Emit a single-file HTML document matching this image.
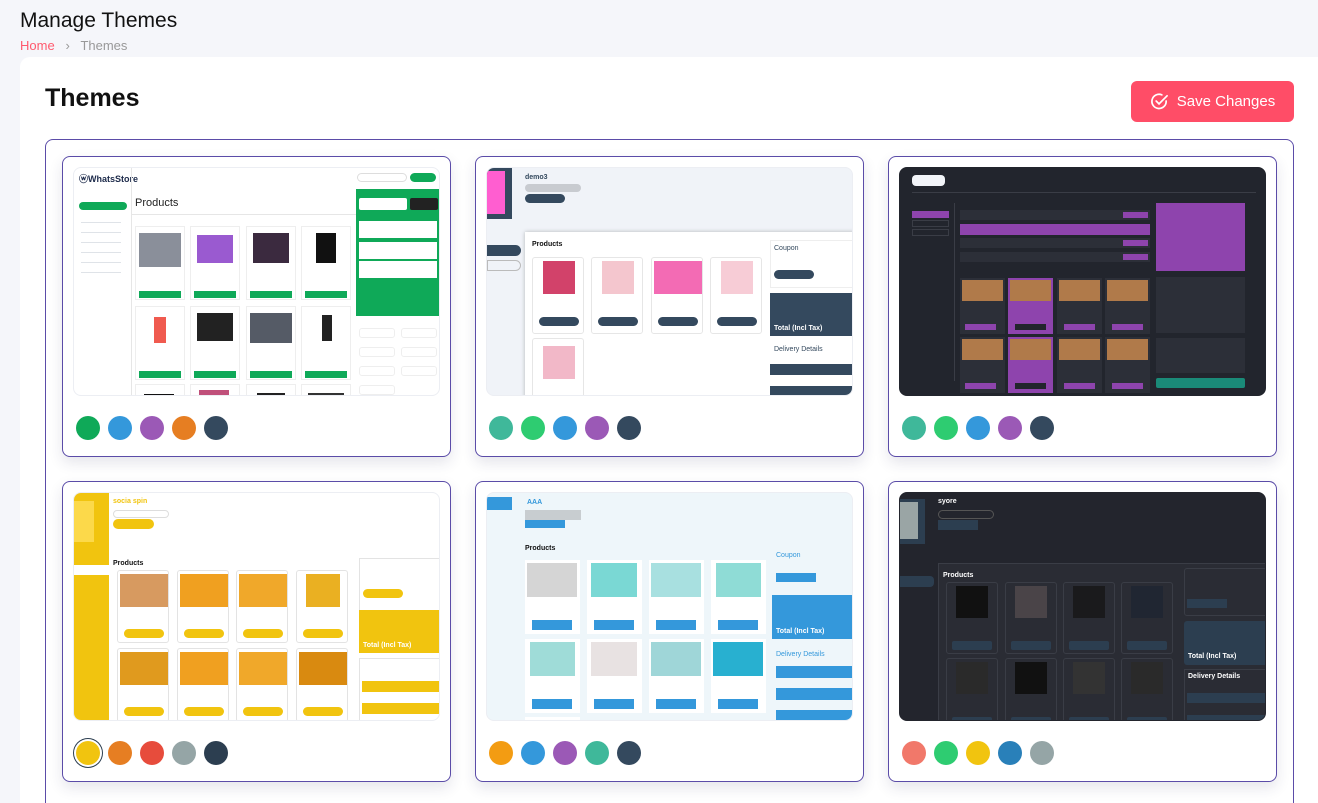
<!DOCTYPE html>
<html><head><meta charset="utf-8"><style>
*{box-sizing:border-box;margin:0;padding:0}
html{width:1318px;height:803px;overflow:hidden}
body{width:1318px;height:803px;overflow:hidden;background:#f5f6fa;font-family:"Liberation Sans",sans-serif;position:relative}
.abs{position:absolute}
.h1{left:20px;top:9px;font-size:21px;color:#111}
.bc{left:20px;top:38px;font-size:13px;color:#999}
.bc span.home{color:#ff5a6e}
.main{left:20px;top:57px;width:1310px;height:746px;background:#fff;border-radius:10px 10px 0 0}
.t{left:45px;top:84px;font-size:25px;font-weight:bold;color:#111}
.btn{left:1131px;top:81px;width:163px;height:41px;background:#ff4d67;border-radius:6px;color:#fff;font-size:15px;display:flex;align-items:center;justify-content:center;gap:8px}
.box{left:45px;top:139px;width:1249px;height:700px;border:1px solid #5b4ca8;border-radius:8px}
.card{position:absolute;width:389px;height:301px;border:1px solid #5b4ca8;border-radius:8px;background:#fff;box-shadow:0 6px 14px rgba(40,40,90,.12)}
.pv{position:absolute;left:10px;top:10px;width:367px;height:229px;border-radius:8px;overflow:hidden;border:1px solid #eceef3}
.sw{position:absolute;top:259px;left:13px;display:flex;gap:8px}
.sw i{display:block;width:24px;height:24px;border-radius:50%}
.pv div{position:absolute}
.tx{font-size:7px;font-weight:bold;white-space:nowrap}
</style></head><body>
<div class="abs h1">Manage Themes</div>
<div class="abs bc"><span class="home">Home</span> &nbsp;&nbsp;›&nbsp;&nbsp; Themes</div>
<div class="abs main"></div>
<div class="abs t">Themes</div>
<div class="abs btn"><svg width="19" height="19" viewBox="0 0 20 20" fill="none" stroke="#fff" stroke-width="1.8" stroke-linecap="round"><path d="M17 9.5A7.5 7.5 0 1 1 12.5 3"/><path d="M6.5 9.5l3 3L18 4"/></svg>Save Changes</div>
<div class="abs box"></div>

<!-- Card 1 -->
<div class="card" style="left:62px;top:156px">
<div class="pv" style="background:#fff">
 <div class="tx" style="left:5px;top:4px;font-size:9px;color:#1c2a4a">ⓦWhatsStore</div>
 <div style="left:57px;top:0;width:1px;height:229px;background:#e6e6e6"></div>
 <div style="left:5px;top:34px;width:48px;height:8px;background:#0fa958;border-radius:4px"></div>
 <div style="left:7px;top:46px;width:40px;height:60px;background:repeating-linear-gradient(#fff 0 8px,#dfe3e8 8px 9px,#fff 9px 10px)"></div>
 <div class="tx" style="left:61px;top:29px;font-size:11px;font-weight:normal;color:#222">Products</div>
 <div style="left:58px;top:46px;width:225px;height:1px;background:#e6e6e6"></div>
 <div style="left:61px;top:58px;width:50px;height:74px;border:1px solid #eee"><div style="left:3px;top:6px;width:42px;height:34px;background:#8a8f9a"></div><div style="left:3px;top:64px;width:42px;height:7px;background:#0fa958"></div></div>
 <div style="left:116px;top:58px;width:50px;height:74px;border:1px solid #eee"><div style="left:6px;top:8px;width:36px;height:28px;background:#9a5ad0"></div><div style="left:3px;top:64px;width:42px;height:7px;background:#0fa958"></div></div>
 <div style="left:172px;top:58px;width:50px;height:74px;border:1px solid #eee"><div style="left:6px;top:6px;width:36px;height:30px;background:#3b2a3f"></div><div style="left:3px;top:64px;width:42px;height:7px;background:#0fa958"></div></div>
 <div style="left:227px;top:58px;width:50px;height:74px;border:1px solid #eee"><div style="left:14px;top:6px;width:20px;height:30px;background:#111"></div><div style="left:3px;top:64px;width:42px;height:7px;background:#0fa958"></div></div>
 <div style="left:61px;top:138px;width:50px;height:74px;border:1px solid #eee"><div style="left:18px;top:10px;width:12px;height:26px;background:#f05a4f"></div><div style="left:3px;top:64px;width:42px;height:7px;background:#0fa958"></div></div>
 <div style="left:116px;top:138px;width:50px;height:74px;border:1px solid #eee"><div style="left:6px;top:6px;width:36px;height:28px;background:#222"></div><div style="left:3px;top:64px;width:42px;height:7px;background:#0fa958"></div></div>
 <div style="left:172px;top:138px;width:50px;height:74px;border:1px solid #eee"><div style="left:3px;top:6px;width:42px;height:30px;background:#555b66"></div><div style="left:3px;top:64px;width:42px;height:7px;background:#0fa958"></div></div>
 <div style="left:227px;top:138px;width:50px;height:74px;border:1px solid #eee"><div style="left:20px;top:8px;width:10px;height:26px;background:#222"></div><div style="left:3px;top:64px;width:42px;height:7px;background:#0fa958"></div></div>
 <div style="left:61px;top:216px;width:50px;height:20px;border:1px solid #eee"><div style="left:8px;top:9px;width:30px;height:10px;background:#111"></div></div>
 <div style="left:116px;top:216px;width:50px;height:20px;border:1px solid #eee"><div style="left:8px;top:5px;width:30px;height:14px;background:#c0507a"></div></div>
 <div style="left:172px;top:216px;width:50px;height:20px;border:1px solid #eee"><div style="left:10px;top:8px;width:28px;height:12px;background:#222"></div></div>
 <div style="left:227px;top:216px;width:50px;height:20px;border:1px solid #eee"><div style="left:6px;top:8px;width:36px;height:12px;background:#333"></div></div>
 <div style="left:283px;top:5px;width:50px;height:9px;border:1px solid #ddd;border-radius:5px"></div>
 <div style="left:336px;top:5px;width:26px;height:9px;background:#0fa958;border-radius:5px"></div>
 <div style="left:282px;top:21px;width:85px;height:127px;background:#0fa958"></div>
 <div style="left:285px;top:30px;width:48px;height:12px;background:#fff;border-radius:2px"></div>
 <div style="left:336px;top:30px;width:28px;height:12px;background:#222;border-radius:2px"></div>
 <div style="left:285px;top:53px;width:78px;height:17px;background:#fff"></div>
 <div style="left:285px;top:74px;width:78px;height:17px;background:#fff"></div>
 <div style="left:285px;top:93px;width:78px;height:17px;background:#fff"></div>
 <div style="left:285px;top:160px;width:36px;height:10px;border:1px solid #eee;border-radius:3px"></div>
 <div style="left:327px;top:160px;width:36px;height:10px;border:1px solid #eee;border-radius:3px"></div>
 <div style="left:285px;top:179px;width:36px;height:10px;border:1px solid #eee;border-radius:3px"></div>
 <div style="left:327px;top:179px;width:36px;height:10px;border:1px solid #eee;border-radius:3px"></div>
 <div style="left:285px;top:198px;width:36px;height:10px;border:1px solid #eee;border-radius:3px"></div>
 <div style="left:327px;top:198px;width:36px;height:10px;border:1px solid #eee;border-radius:3px"></div>
 <div style="left:285px;top:217px;width:36px;height:10px;border:1px solid #eee;border-radius:3px"></div>
</div>
<div class="sw"><i style="background:#0fa958"></i><i style="background:#3498db"></i><i style="background:#9b59b6"></i><i style="background:#e67e22"></i><i style="background:#34495e"></i></div>
</div>

<!-- Card 2 -->
<div class="card" style="left:475px;top:156px">
<div class="pv" style="background:#f0f3f8">
 <div style="left:0;top:0;width:25px;height:51px;background:#34495e"></div>
 <div style="left:0;top:3px;width:18px;height:43px;background:#ff5ed0"></div>
 <div class="tx" style="left:38px;top:6px;color:#34495e">demo3</div>
 <div style="left:38px;top:16px;width:56px;height:8px;background:#c8cbd0;border-radius:4px"></div>
 <div style="left:38px;top:26px;width:40px;height:9px;background:#34495e;border-radius:5px"></div>
 <div style="left:0;top:77px;width:34px;height:11px;background:#34495e;border-radius:0 6px 6px 0"></div>
 <div style="left:0;top:92px;width:34px;height:11px;border:1px solid #bbb;border-radius:0 6px 6px 0"></div>
 <div style="left:38px;top:64px;width:330px;height:170px;background:#fff;box-shadow:0 0 4px rgba(0,0,0,.25)"></div>
 <div class="tx" style="left:45px;top:73px;color:#111">Products</div>
 <div style="left:45px;top:89px;width:52px;height:77px;border:1px solid #e6e6e6;border-radius:3px"><div style="left:10px;top:3px;width:32px;height:33px;background:#d2426a"></div><div style="left:6px;top:59px;width:40px;height:9px;background:#34495e;border-radius:5px"></div></div>
 <div style="left:104px;top:89px;width:52px;height:77px;border:1px solid #e6e6e6;border-radius:3px"><div style="left:10px;top:3px;width:32px;height:33px;background:#f4c6ce"></div><div style="left:6px;top:59px;width:40px;height:9px;background:#34495e;border-radius:5px"></div></div>
 <div style="left:164px;top:89px;width:52px;height:77px;border:1px solid #e6e6e6;border-radius:3px"><div style="left:2px;top:3px;width:48px;height:33px;background:#f36bb4"></div><div style="left:6px;top:59px;width:40px;height:9px;background:#34495e;border-radius:5px"></div></div>
 <div style="left:223px;top:89px;width:52px;height:77px;border:1px solid #e6e6e6;border-radius:3px"><div style="left:10px;top:3px;width:32px;height:33px;background:#f7ccd6"></div><div style="left:6px;top:59px;width:40px;height:9px;background:#34495e;border-radius:5px"></div></div>
 <div style="left:45px;top:170px;width:52px;height:70px;border:1px solid #e6e6e6;border-radius:3px"><div style="left:10px;top:7px;width:32px;height:33px;background:#f2b8c8"></div></div>
 <div style="left:283px;top:72px;width:84px;height:48px;background:#fff;border:1px solid #eee"></div>
 <div class="tx" style="left:287px;top:77px;color:#34495e;font-weight:normal">Coupon</div>
 <div style="left:287px;top:102px;width:40px;height:9px;background:#34495e;border-radius:5px"></div>
 <div style="left:283px;top:125px;width:84px;height:43px;background:#34495e"></div>
 <div class="tx" style="left:287px;top:157px;color:#fff">Total (Incl Tax)</div>
 <div class="tx" style="left:287px;top:178px;color:#34495e;font-weight:normal">Delivery Details</div>
 <div style="left:283px;top:196px;width:84px;height:11px;background:#34495e"></div>
 <div style="left:283px;top:218px;width:84px;height:11px;background:#34495e"></div>
</div>
<div class="sw"><i style="background:#3fb89a"></i><i style="background:#2ecc71"></i><i style="background:#3498db"></i><i style="background:#9b59b6"></i><i style="background:#34495e"></i></div>
</div>

<!-- Card 3 -->
<div class="card" style="left:888px;top:156px">
<div class="pv" style="background:#22252d;border-color:#22252d">
 <div style="left:12px;top:7px;width:33px;height:11px;background:#f2f4f8;border-radius:4px"></div>
 <div style="left:12px;top:24px;width:344px;height:1px;background:#3a3d46"></div>
 <div style="left:12px;top:43px;width:37px;height:7px;background:#8e44ad"></div>
 <div style="left:12px;top:52px;width:37px;height:7px;border:1px solid #3a3d46"></div>
 <div style="left:12px;top:61px;width:37px;height:7px;border:1px solid #3a3d46"></div>
 <div style="left:54px;top:35px;width:1px;height:178px;background:#3a3d46"></div>
 <div style="left:60px;top:42px;width:190px;height:10px;background:#2c2f38"></div>
 <div style="left:60px;top:56px;width:190px;height:11px;background:#8e44ad"></div>
 <div style="left:60px;top:70px;width:190px;height:10px;background:#2c2f38"></div>
 <div style="left:60px;top:84px;width:190px;height:10px;background:#2c2f38"></div>
 <div style="left:223px;top:44px;width:25px;height:6px;background:#8e44ad"></div>
 <div style="left:223px;top:72px;width:25px;height:6px;background:#8e44ad"></div>
 <div style="left:223px;top:86px;width:25px;height:6px;background:#8e44ad"></div>
 <div style="left:60px;top:110px;width:45px;height:56px;background:#2c2f38"><div style="left:2px;top:2px;width:41px;height:21px;background:#b07a4a"></div><div style="left:5px;top:46px;width:31px;height:6px;background:#8e44ad"></div></div>
 <div style="left:108px;top:110px;width:45px;height:56px;background:#8e44ad"><div style="left:2px;top:2px;width:41px;height:21px;background:#b07a4a"></div><div style="left:7px;top:46px;width:31px;height:6px;background:#22252d"></div></div>
 <div style="left:157px;top:110px;width:45px;height:56px;background:#2c2f38"><div style="left:2px;top:2px;width:41px;height:21px;background:#b07a4a"></div><div style="left:7px;top:46px;width:31px;height:6px;background:#8e44ad"></div></div>
 <div style="left:205px;top:110px;width:45px;height:56px;background:#2c2f38"><div style="left:2px;top:2px;width:41px;height:21px;background:#b07a4a"></div><div style="left:7px;top:46px;width:31px;height:6px;background:#8e44ad"></div></div>
 <div style="left:60px;top:169px;width:45px;height:56px;background:#2c2f38"><div style="left:2px;top:2px;width:41px;height:21px;background:#b07a4a"></div><div style="left:5px;top:46px;width:31px;height:6px;background:#8e44ad"></div></div>
 <div style="left:108px;top:169px;width:45px;height:56px;background:#8e44ad"><div style="left:2px;top:2px;width:41px;height:21px;background:#b07a4a"></div><div style="left:7px;top:46px;width:31px;height:6px;background:#22252d"></div></div>
 <div style="left:157px;top:169px;width:45px;height:56px;background:#2c2f38"><div style="left:2px;top:2px;width:41px;height:21px;background:#b07a4a"></div><div style="left:7px;top:46px;width:31px;height:6px;background:#8e44ad"></div></div>
 <div style="left:205px;top:169px;width:45px;height:56px;background:#2c2f38"><div style="left:2px;top:2px;width:41px;height:21px;background:#b07a4a"></div><div style="left:7px;top:46px;width:31px;height:6px;background:#8e44ad"></div></div>
 <div style="left:256px;top:35px;width:89px;height:68px;background:#8e44ad"></div>
 <div style="left:256px;top:109px;width:89px;height:56px;background:#2c2f38"></div>
 <div style="left:256px;top:170px;width:89px;height:35px;background:#2c2f38"></div>
 <div style="left:256px;top:210px;width:89px;height:10px;background:#1a8a78;border-radius:2px"></div>
</div>
<div class="sw"><i style="background:#3fb89a"></i><i style="background:#2ecc71"></i><i style="background:#3498db"></i><i style="background:#9b59b6"></i><i style="background:#34495e"></i></div>
</div>

<!-- Card 4 -->
<div class="card" style="left:62px;top:481px">
<div class="pv" style="background:#fff">
 <div style="left:0;top:0;width:35px;height:72px;background:#f1c40f"></div>
 <div style="left:0;top:8px;width:20px;height:41px;background:#fcd94a"></div>
 <div style="left:0;top:82px;width:35px;height:150px;background:#f1c40f"></div>
 <div class="tx" style="left:39px;top:5px;color:#f1c40f">socia spin</div>
 <div style="left:39px;top:17px;width:56px;height:8px;border:1px solid #ddd;border-radius:4px"></div>
 <div style="left:39px;top:26px;width:41px;height:10px;background:#f1c40f;border-radius:5px"></div>
 <div class="tx" style="left:39px;top:67px;color:#111">Products</div>
 <div style="left:43px;top:77px;width:52px;height:73px;border:1px solid #e3e3e3;border-radius:3px"><div style="left:2px;top:3px;width:48px;height:33px;background:#d79a60"></div><div style="left:6px;top:58px;width:40px;height:9px;background:#f1c40f;border-radius:5px"></div></div>
 <div style="left:103px;top:77px;width:52px;height:73px;border:1px solid #e3e3e3;border-radius:3px"><div style="left:2px;top:3px;width:48px;height:33px;background:#f0a020"></div><div style="left:6px;top:58px;width:40px;height:9px;background:#f1c40f;border-radius:5px"></div></div>
 <div style="left:162px;top:77px;width:52px;height:73px;border:1px solid #e3e3e3;border-radius:3px"><div style="left:2px;top:3px;width:48px;height:33px;background:#f0a82a"></div><div style="left:6px;top:58px;width:40px;height:9px;background:#f1c40f;border-radius:5px"></div></div>
 <div style="left:222px;top:77px;width:52px;height:73px;border:1px solid #e3e3e3;border-radius:3px"><div style="left:9px;top:3px;width:34px;height:33px;background:#eab022"></div><div style="left:6px;top:58px;width:40px;height:9px;background:#f1c40f;border-radius:5px"></div></div>
 <div style="left:43px;top:155px;width:52px;height:74px;border:1px solid #e3e3e3;border-radius:3px"><div style="left:2px;top:3px;width:48px;height:33px;background:#e09a1e"></div><div style="left:6px;top:58px;width:40px;height:9px;background:#f1c40f;border-radius:5px"></div></div>
 <div style="left:103px;top:155px;width:52px;height:74px;border:1px solid #e3e3e3;border-radius:3px"><div style="left:2px;top:3px;width:48px;height:33px;background:#f0a020"></div><div style="left:6px;top:58px;width:40px;height:9px;background:#f1c40f;border-radius:5px"></div></div>
 <div style="left:162px;top:155px;width:52px;height:74px;border:1px solid #e3e3e3;border-radius:3px"><div style="left:2px;top:3px;width:48px;height:33px;background:#f0a82a"></div><div style="left:6px;top:58px;width:40px;height:9px;background:#f1c40f;border-radius:5px"></div></div>
 <div style="left:222px;top:155px;width:52px;height:74px;border:1px solid #e3e3e3;border-radius:3px"><div style="left:2px;top:3px;width:48px;height:33px;background:#d98a10"></div><div style="left:6px;top:58px;width:40px;height:9px;background:#f1c40f;border-radius:5px"></div></div>
 <div style="left:285px;top:65px;width:82px;height:55px;border:1px solid #e3e3e3"></div>
 <div style="left:289px;top:96px;width:40px;height:9px;background:#f1c40f;border-radius:5px"></div>
 <div style="left:285px;top:117px;width:82px;height:43px;background:#f1c40f"></div>
 <div class="tx" style="left:289px;top:149px;color:#fff">Total (Incl Tax)</div>
 <div style="left:285px;top:165px;width:82px;height:70px;border:1px solid #e3e3e3"></div>
 <div style="left:288px;top:188px;width:79px;height:11px;background:#f1c40f"></div>
 <div style="left:288px;top:210px;width:79px;height:11px;background:#f1c40f"></div>
</div>
<div class="sw"><i style="background:#f1c40f;box-shadow:0 0 0 2px #fff,0 0 0 3px #2c3e50"></i><i style="background:#e67e22"></i><i style="background:#e74c3c"></i><i style="background:#95a5a6"></i><i style="background:#2c3e50"></i></div>
</div>

<!-- Card 5 -->
<div class="card" style="left:475px;top:481px">
<div class="pv" style="background:#eef6fa">
 <div style="left:0;top:4px;width:25px;height:13px;background:#3498db"></div>
 <div class="tx" style="left:40px;top:6px;color:#3498db">AAA</div>
 <div style="left:38px;top:17px;width:56px;height:10px;background:#c8cdd0"></div>
 <div style="left:38px;top:27px;width:40px;height:8px;background:#3498db"></div>
 <div class="tx" style="left:38px;top:52px;color:#111">Products</div>
 <div style="left:38px;top:67px;width:55px;height:74px;background:#fff"><div style="left:2px;top:3px;width:50px;height:34px;background:#d5d5d5"></div><div style="left:7px;top:60px;width:40px;height:10px;background:#3498db"></div></div>
 <div style="left:100px;top:67px;width:55px;height:74px;background:#fff"><div style="left:4px;top:3px;width:46px;height:34px;background:#7ad8d4"></div><div style="left:7px;top:60px;width:40px;height:10px;background:#3498db"></div></div>
 <div style="left:162px;top:67px;width:55px;height:74px;background:#fff"><div style="left:2px;top:3px;width:50px;height:34px;background:#a8e0e0"></div><div style="left:7px;top:60px;width:40px;height:10px;background:#3498db"></div></div>
 <div style="left:224px;top:67px;width:55px;height:74px;background:#fff"><div style="left:5px;top:3px;width:45px;height:34px;background:#8fdcd6"></div><div style="left:7px;top:60px;width:40px;height:10px;background:#3498db"></div></div>
 <div style="left:38px;top:146px;width:55px;height:74px;background:#fff"><div style="left:5px;top:3px;width:45px;height:34px;background:#9fdcd8"></div><div style="left:7px;top:60px;width:40px;height:10px;background:#3498db"></div></div>
 <div style="left:100px;top:146px;width:55px;height:74px;background:#fff"><div style="left:4px;top:3px;width:46px;height:34px;background:#e8e2e2"></div><div style="left:7px;top:60px;width:40px;height:10px;background:#3498db"></div></div>
 <div style="left:162px;top:146px;width:55px;height:74px;background:#fff"><div style="left:2px;top:3px;width:50px;height:34px;background:#9fd6d8"></div><div style="left:7px;top:60px;width:40px;height:10px;background:#3498db"></div></div>
 <div style="left:224px;top:146px;width:55px;height:74px;background:#fff"><div style="left:2px;top:3px;width:50px;height:34px;background:#28b0d0"></div><div style="left:7px;top:60px;width:40px;height:10px;background:#3498db"></div></div>
 <div style="left:38px;top:224px;width:55px;height:10px;background:#fff"></div>
 <div class="tx" style="left:289px;top:59px;color:#3498db;font-weight:normal">Coupon</div>
 <div style="left:289px;top:80px;width:40px;height:9px;background:#3498db"></div>
 <div style="left:285px;top:102px;width:82px;height:44px;background:#3498db"></div>
 <div class="tx" style="left:289px;top:135px;color:#fff">Total (Incl Tax)</div>
 <div class="tx" style="left:289px;top:158px;color:#3498db;font-weight:normal">Delivery Details</div>
 <div style="left:289px;top:173px;width:78px;height:12px;background:#3498db"></div>
 <div style="left:289px;top:195px;width:78px;height:12px;background:#3498db"></div>
 <div style="left:289px;top:217px;width:78px;height:12px;background:#3498db"></div>
</div>
<div class="sw"><i style="background:#f39c12"></i><i style="background:#3498db"></i><i style="background:#9b59b6"></i><i style="background:#3fb89a"></i><i style="background:#34495e"></i></div>
</div>

<!-- Card 6 -->
<div class="card" style="left:888px;top:481px">
<div class="pv" style="background:#23252d;border-color:#23252d">
 <div style="left:0;top:6px;width:25px;height:45px;background:#2c3e50"></div>
 <div style="left:0;top:9px;width:18px;height:37px;background:#9aa5a5"></div>
 <div class="tx" style="left:38px;top:5px;color:#fff">syore</div>
 <div style="left:38px;top:17px;width:56px;height:9px;border:1px solid #555;border-radius:5px"></div>
 <div style="left:38px;top:27px;width:40px;height:10px;background:#2c3e50"></div>
 <div style="left:0;top:83px;width:34px;height:11px;background:#2c3e50;border-radius:0 4px 4px 0"></div>
 <div style="left:38px;top:70px;width:330px;height:165px;background:#2a2c34;border:1px solid #3a3d46"></div>
 <div class="tx" style="left:43px;top:79px;color:#fff">Products</div>
 <div style="left:46px;top:89px;width:52px;height:72px;border:1px solid #3a3d46;border-radius:3px"><div style="left:9px;top:3px;width:32px;height:32px;background:#111"></div><div style="left:5px;top:58px;width:40px;height:9px;background:#2c3e50;border-radius:2px"></div></div>
 <div style="left:105px;top:89px;width:52px;height:72px;border:1px solid #3a3d46;border-radius:3px"><div style="left:9px;top:3px;width:32px;height:32px;background:#4a4448"></div><div style="left:5px;top:58px;width:40px;height:9px;background:#2c3e50;border-radius:2px"></div></div>
 <div style="left:163px;top:89px;width:52px;height:72px;border:1px solid #3a3d46;border-radius:3px"><div style="left:9px;top:3px;width:32px;height:32px;background:#1a1a1c"></div><div style="left:5px;top:58px;width:40px;height:9px;background:#2c3e50;border-radius:2px"></div></div>
 <div style="left:221px;top:89px;width:52px;height:72px;border:1px solid #3a3d46;border-radius:3px"><div style="left:9px;top:3px;width:32px;height:32px;background:#202632"></div><div style="left:5px;top:58px;width:40px;height:9px;background:#2c3e50;border-radius:2px"></div></div>
 <div style="left:46px;top:165px;width:52px;height:72px;border:1px solid #3a3d46;border-radius:3px"><div style="left:9px;top:3px;width:32px;height:32px;background:#2a2a2a"></div><div style="left:5px;top:58px;width:40px;height:9px;background:#2c3e50;border-radius:2px"></div></div>
 <div style="left:105px;top:165px;width:52px;height:72px;border:1px solid #3a3d46;border-radius:3px"><div style="left:9px;top:3px;width:32px;height:32px;background:#111"></div><div style="left:5px;top:58px;width:40px;height:9px;background:#2c3e50;border-radius:2px"></div></div>
 <div style="left:163px;top:165px;width:52px;height:72px;border:1px solid #3a3d46;border-radius:3px"><div style="left:9px;top:3px;width:32px;height:32px;background:#333"></div><div style="left:5px;top:58px;width:40px;height:9px;background:#2c3e50;border-radius:2px"></div></div>
 <div style="left:221px;top:165px;width:52px;height:72px;border:1px solid #3a3d46;border-radius:3px"><div style="left:9px;top:3px;width:32px;height:32px;background:#2a2a2a"></div><div style="left:5px;top:58px;width:40px;height:9px;background:#2c3e50;border-radius:2px"></div></div>
 <div style="left:284px;top:75px;width:83px;height:48px;border:1px solid #3a3d46;border-radius:3px"></div>
 <div style="left:287px;top:106px;width:40px;height:9px;background:#2c3e50"></div>
 <div style="left:284px;top:128px;width:83px;height:44px;background:#2c3e50;border-radius:3px"></div>
 <div class="tx" style="left:288px;top:160px;color:#fff">Total (Incl Tax)</div>
 <div style="left:284px;top:176px;width:83px;height:60px;border:1px solid #3a3d46"></div>
 <div class="tx" style="left:288px;top:180px;color:#fff">Delivery Details</div>
 <div style="left:287px;top:200px;width:80px;height:10px;background:#2c3e50"></div>
 <div style="left:287px;top:222px;width:80px;height:10px;background:#2c3e50"></div>
</div>
<div class="sw"><i style="background:#f1786a"></i><i style="background:#2ecc71"></i><i style="background:#f1c40f"></i><i style="background:#2980b9"></i><i style="background:#95a5a6"></i></div>
</div>

</body></html>
